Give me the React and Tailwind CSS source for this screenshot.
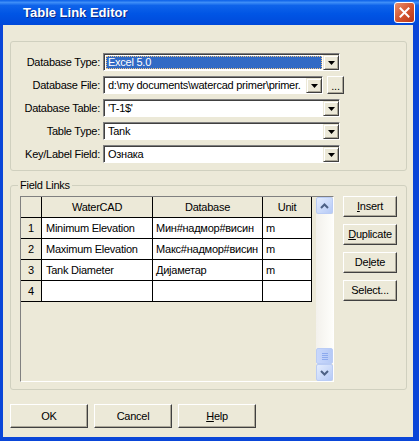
import React from "react";

const F = "font-['Liberation_Sans',Arial,sans-serif]";

function Tri() {
  return (
    <svg width="7" height="4" viewBox="0 0 7 4">
      <path d="M0 0H7L3.5 4Z" fill="#000" />
    </svg>
  );
}

function DropBtn() {
  return (
    <div className="w-[16px] h-full flex-none flex items-center justify-center bg-[#ECE9D8] border border-t-[#ECE9D8] border-l-[#ECE9D8] border-b-[#404040] border-r-[#404040] shadow-[inset_1px_1px_0_#fff,inset_-1px_-1px_0_#ACA899]">
      <Tri />
    </div>
  );
}

function Combo({ value, selected, width }) {
  return (
    <div
      className={`h-[18px] flex-none flex bg-white border border-t-[#808080] border-l-[#808080] border-b-white border-r-white shadow-[inset_1px_1px_0_#404040] pt-[1px] pl-[1px] ${width}`}
    >
      <div className="flex-1 min-w-0 flex p-[1px]">
        <div
          className={`flex-1 min-w-0 flex items-center pl-[2px] whitespace-nowrap overflow-hidden ${
            selected ? "bg-[#316AC5] text-white outline outline-1 outline-dotted outline-[#F2C680] -outline-offset-1" : "text-black"
          }`}
        >
          {value}
        </div>
      </div>
      <DropBtn />
    </div>
  );
}

function Row({ label, children }) {
  return (
    <div className="flex items-center h-[18px]">
      <div className="w-[89px] text-right whitespace-nowrap">{label}</div>
      <div className="ml-[3px] flex items-center gap-[4px]">{children}</div>
    </div>
  );
}

function Btn({ children, className = "" }) {
  return (
    <div
      className={`flex items-center justify-center bg-[#ECE9D8] border border-t-white border-l-white border-b-[#404040] border-r-[#404040] shadow-[inset_-1px_-1px_0_#ACA899] text-black ${className}`}
    >
      {children}
    </div>
  );
}

function ScrollBtn({ up }) {
  return (
    <div className="h-[17px] flex-none flex items-center justify-center rounded-[2px] border border-[#BACCF5] bg-[linear-gradient(to_bottom_right,#E4EDFE,#B6CAF6)]">
      <svg width="9" height="6" viewBox="0 0 9 6">
        <path
          d={up ? "M1 5L4.5 1.5L8 5" : "M1 1L4.5 4.5L8 1"}
          stroke="#4D6185"
          strokeWidth="2"
          fill="none"
        />
      </svg>
    </div>
  );
}

const rows = [
  ["1", "Minimum Elevation", "Мин#надмор#висин", "m"],
  ["2", "Maximum Elevation", "Макс#надмор#висин", "m"],
  ["3", "Tank Diameter", "Дијаметар", "m"],
  ["4", "", "", ""],
];

export default function App() {
  return (
    <div className={`w-[419px] h-[441px] flex flex-col bg-[#0A46D8] ${F} text-[11px] tracking-[-0.25px] text-black`}>
      {/* Title bar */}
      <div className="h-[25px] flex-none flex items-center justify-between pl-[23px] pr-[4px] bg-[linear-gradient(to_bottom,#0A5FE8_0%,#3D8DF7_10%,#0E63EA_22%,#0055E5_55%,#0049DA_100%)]">
        <span className="text-white font-bold text-[13px] tracking-normal [text-shadow:1px_1px_0_#0A2A8A]">
          Table Link Editor
        </span>
        <div className="w-[21px] h-[21px] rounded-[3px] border border-white flex items-center justify-center bg-[linear-gradient(to_bottom_right,#E8906E,#D2512C_55%,#B8381A)]">
          <svg width="11" height="11" viewBox="0 0 11 11">
            <path d="M1.5 1.5L9.5 9.5M9.5 1.5L1.5 9.5" stroke="#fff" strokeWidth="2" strokeLinecap="square" />
          </svg>
        </div>
      </div>

      {/* Body */}
      <div className="flex-1 ml-[3px] mr-[6px] mb-[4px] bg-[#ECE9D8] flex flex-col pt-[16px] pl-[7px] pr-[6px]">
        {/* Top group */}
        <div className="h-[130px] flex-none border border-[#D0D0BF] rounded-[3px] pt-[11px] flex flex-col gap-[5px]">
          <Row label="Database Type:">
            <Combo value="Excel 5.0" selected width="w-[237px]" />
          </Row>
          <Row label="Database File:">
            <Combo value="d:\my documents\watercad primer\primer." width="w-[220px]" />
            <Btn className="w-[17px] h-[18px] items-end pb-[1px] leading-none">...</Btn>
          </Row>
          <Row label="Database Table:">
            <Combo value="'T-1$'" width="w-[237px]" />
          </Row>
          <Row label="Table Type:">
            <Combo value="Tank" width="w-[237px]" />
          </Row>
          <Row label="Key/Label Field:">
            <Combo value="Ознака" width="w-[237px]" />
          </Row>
        </div>

        {/* Field Links */}
        <fieldset className="mt-[8px] h-[211px] flex-none border border-[#D0D0BF] rounded-[3px] pl-[9px] pb-[7px]">
          <legend className="ml-[-2px] px-[2px] leading-[13px]">Field Links</legend>
          <div className="flex mt-[4px]">
            <div className="w-[314px] h-[186px] flex border border-t-[#808080] border-l-[#808080] border-b-white border-r-white">
              <div className="w-[291px] flex-none flex flex-col">
                <div className="flex h-[21px] bg-[#ECE9D8] border-b border-black">
                  <div className="w-[21px] border-r border-black" />
                  <div className="w-[111px] border-r border-black flex items-center justify-center">WaterCAD</div>
                  <div className="w-[110px] border-r border-black flex items-center justify-center">Database</div>
                  <div className="w-[49px] border-r border-black flex items-center justify-center">Unit</div>
                </div>
                {rows.map((r) => (
                  <div key={r[0]} className="flex h-[21px] border-b border-black">
                    <div className="w-[21px] bg-[#ECE9D8] border-r border-black flex items-center justify-center">{r[0]}</div>
                    <div className="w-[111px] bg-white border-r border-black flex items-center pl-[4px] whitespace-nowrap overflow-hidden">{r[1]}</div>
                    <div className="w-[110px] bg-white border-r border-black flex items-center pl-[3px] whitespace-nowrap overflow-hidden">{r[2]}</div>
                    <div className="w-[49px] bg-white border-r border-black flex items-center pl-[3px]">{r[3]}</div>
                  </div>
                ))}
              </div>
              <div className="flex-1" />
              <div className="w-[17px] flex-none flex flex-col">
                <ScrollBtn up />
                <div className="flex-1 flex flex-col justify-end bg-[linear-gradient(to_right,#F3F1EC,#FEFEFB)]">
                  <div className="h-[16px] rounded-[2px] border border-[#BACCF5] bg-[linear-gradient(to_right,#C9D8FC,#B6CAF6)] flex flex-col items-center justify-center gap-[1px]">
                    <div className="w-[6px] h-[1px] bg-[#8DAAEE]" />
                    <div className="w-[6px] h-[1px] bg-[#8DAAEE]" />
                    <div className="w-[6px] h-[1px] bg-[#8DAAEE]" />
                    <div className="w-[6px] h-[1px] bg-[#8DAAEE]" />
                  </div>
                </div>
                <ScrollBtn />
              </div>
            </div>
            <div className="ml-[9px] flex flex-col gap-[7px]">
              <Btn className="w-[54px] h-[21px]"><span><u>I</u>nsert</span></Btn>
              <Btn className="w-[54px] h-[21px]"><span><u>D</u>uplicate</span></Btn>
              <Btn className="w-[54px] h-[21px]"><span>De<u>l</u>ete</span></Btn>
              <Btn className="w-[54px] h-[21px]"><span>Select...</span></Btn>
            </div>
          </div>
        </fieldset>

        {/* Bottom buttons */}
        <div className="mt-[14px] flex gap-[6px]">
          <Btn className="w-[78px] h-[24px]">OK</Btn>
          <Btn className="w-[78px] h-[24px]">Cancel</Btn>
          <Btn className="w-[78px] h-[24px]"><span><u>H</u>elp</span></Btn>
        </div>
      </div>
    </div>
  );
}
